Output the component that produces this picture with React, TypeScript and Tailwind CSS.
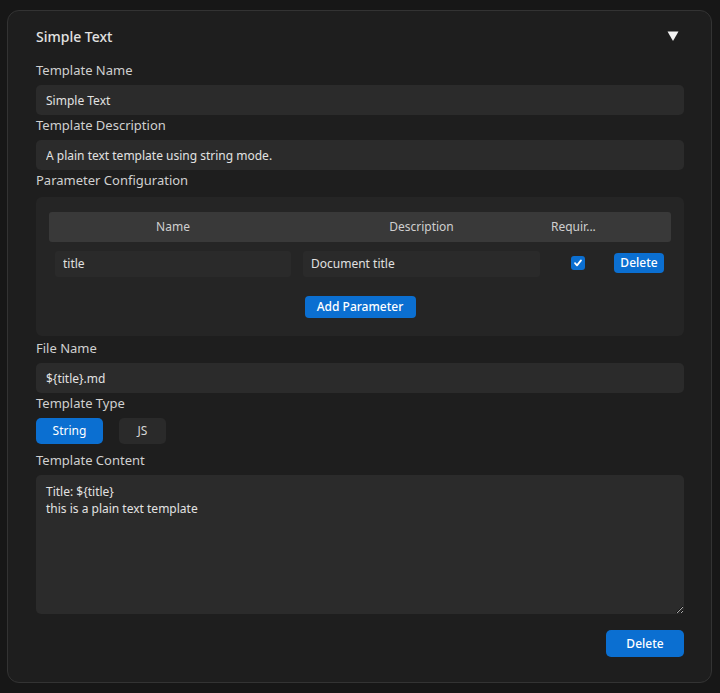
import { useState } from "react";

type Param = { name: string; description: string; required: boolean };

export default function App() {
  const [params, setParams] = useState<Param[]>([
    { name: "title", description: "Document title", required: true },
  ]);
  const [mode, setMode] = useState<"string" | "js">("string");

  const field =
    "w-full h-[30px] rounded-[5px] bg-[#2b2b2b] px-[10px] text-[12px] text-[#e2e2e2] outline-none";
  const label = "text-[13px] leading-[21px] text-[#d0d0d0]";

  return (
    <div
      className="min-h-[693px] w-[720px] bg-[#171717] pt-[10px] pl-[7px]"
      style={{ fontFamily: '"Noto Sans", Inter, "Liberation Sans", sans-serif' }}
    >
      <div className="w-[705px] rounded-[12px] border border-[#333333] bg-[#1e1e1e] pl-[28px] pr-[27px] pt-[15px] pb-[25px]">
        <div className="flex h-[20px] items-center justify-between">
          <div className="text-[14px] font-medium text-[#e2e2e2]">Simple Text</div>
          <svg className="mr-[5px] h-[12px] w-[12px]" viewBox="0 0 12 12">
            <path d="M0.5 1.5h11L6 11z" fill="#f2f2f2" />
          </svg>
        </div>

        <div className={`${label} mt-[14px]`}>Template Name</div>
        <input className={`${field} mt-1`} defaultValue="Simple Text" />
        <div className={label}>Template Description</div>
        <input className={`${field} mt-1`} defaultValue="A plain text template using string mode." />
        <div className={label}>Parameter Configuration</div>

        <div className="mt-[6px] rounded-[6px] bg-[#252525] px-[13px] pt-[15px] pb-[18px]">
          <div className="grid h-[30px] grid-cols-[248px_249px_61px_1fr] items-center rounded-[3px] bg-[#393939] text-[12px] text-[#cfcfcf]">
            <div className="text-center">Name</div>
            <div className="text-center">Description</div>
            <div className="truncate pl-[5px]">Requir...</div>
            <div />
          </div>
          {params.map((p, i) => (
            <div key={i} className="mt-[8px] grid h-[26px] grid-cols-[248px_249px_61px_1fr] items-center">
              <div className="px-[6px]">
                <input
                  className="h-[26px] w-full rounded-[3px] bg-[#2a2a2a] px-[8px] text-[12px] text-[#e0e0e0] outline-none"
                  defaultValue={p.name}
                />
              </div>
              <div className="px-[6px]">
                <input
                  className="h-[26px] w-full rounded-[3px] bg-[#2a2a2a] px-[8px] text-[12px] text-[#e0e0e0] outline-none"
                  defaultValue={p.description}
                />
              </div>
              <div className="flex justify-center pl-[2px]">
                <span className="flex h-[14px] w-[14px] items-center justify-center rounded-[3px] bg-[#0b6fd1]">
                  <svg className="h-[10px] w-[10px]" viewBox="0 0 10 10">
                    <path d="M2 5.2l2 2.2 4-5" fill="none" stroke="#fff" strokeWidth="1.8" strokeLinecap="round" strokeLinejoin="round" />
                  </svg>
                </span>
              </div>
              <div className="flex justify-center">
                <button
                  onClick={() => setParams(params.filter((_, j) => j !== i))}
                  className="h-[20px] rounded-[4px] bg-[#0b6fd1] px-[6px] text-[12px] font-medium text-white"
                >
                  Delete
                </button>
              </div>
            </div>
          ))}
          <div className="mt-[20px] flex justify-center">
            <button
              onClick={() => setParams([...params, { name: "", description: "", required: false }])}
              className="h-[22px] w-[111px] rounded-[4px] bg-[#0b6fd1] text-[12px] font-medium text-white"
            >
              Add Parameter
            </button>
          </div>
        </div>

        <div className={`${label} mt-[2px]`}>File Name</div>
        <input className={`${field} mt-1`} defaultValue="${title}.md" />
        <div className={label}>Template Type</div>
        <div className="mt-1 flex gap-[16px]">
          <button
            onClick={() => setMode("string")}
            className={`h-[26px] w-[67px] rounded-[5px] text-[12px] ${
              mode === "string" ? "bg-[#0b6fd1] text-white" : "bg-[#2a2a2a] text-[#d6d6d6]"
            }`}
          >
            String
          </button>
          <button
            onClick={() => setMode("js")}
            className={`h-[26px] w-[47px] rounded-[5px] text-[12px] ${
              mode === "js" ? "bg-[#0b6fd1] text-white" : "bg-[#2a2a2a] text-[#d6d6d6]"
            }`}
          >
            JS
          </button>
        </div>
        <div className={`${label} mt-[6px]`}>Template Content</div>
        <textarea
          className="mt-1 block h-[139px] w-full rounded-[5px] bg-[#2b2b2b] px-[10px] py-[8px] text-[12px] leading-[17px] text-[#e2e2e2] outline-none"
          defaultValue={"Title: ${title}\nthis is a plain text template"}
        />
        <div className="mt-[16px] flex justify-end">
          <button className="h-[27px] w-[78px] rounded-[5px] bg-[#0b6fd1] text-[12px] font-medium text-white">
            Delete
          </button>
        </div>
      </div>
    </div>
  );
}
